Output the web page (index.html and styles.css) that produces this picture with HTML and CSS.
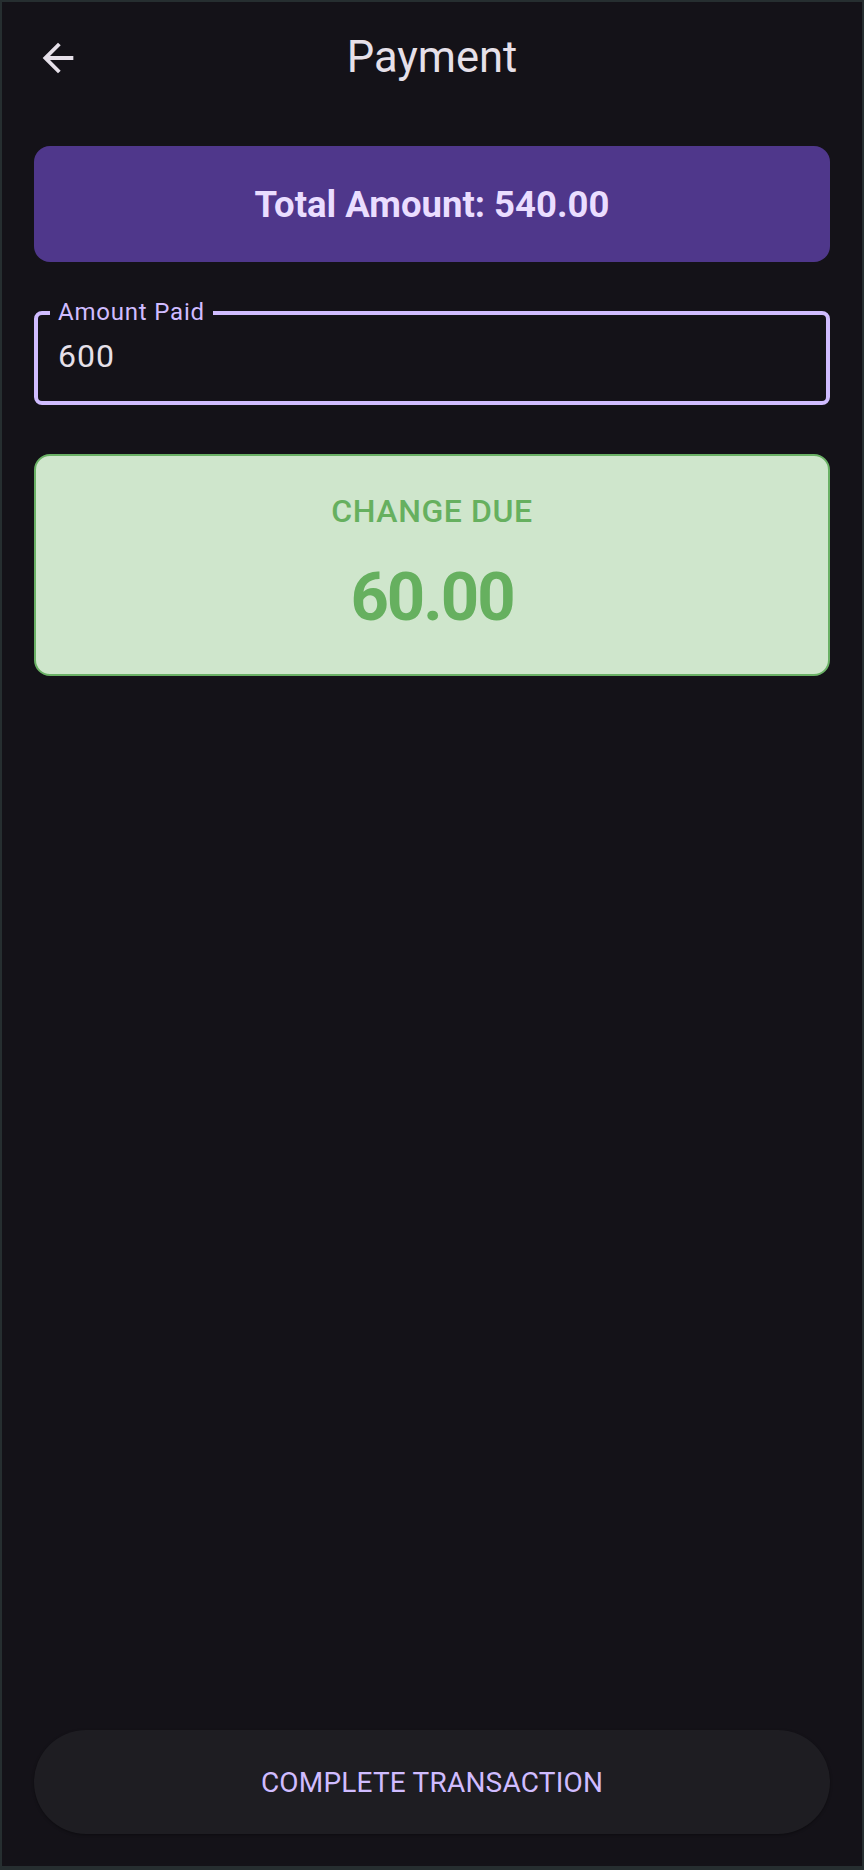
FILE: index.html
```html
<!DOCTYPE html>
<html lang="en">
<head>
<meta charset="utf-8">
<title>Payment</title>
<link rel="stylesheet" href="styles.css">
</head>
<body>
<div class="screen">
  <header class="appbar">
    <div class="appbar-lead">
      <button class="icon-btn" aria-label="Back">
        <svg viewBox="0 0 24 24" width="46" height="46" aria-hidden="true">
          <path d="M20 11H7.83l5.59-5.59L12 4l-8 8 8 8 1.41-1.41L7.83 13H20v-2z" fill="#e6e0e9"/>
        </svg>
      </button>
    </div>
    <h1 class="appbar-title">Payment</h1>
    <div></div>
  </header>

  <main class="content">
    <div class="total-card">Total Amount: 540.00</div>

    <div class="field">
      <span class="field-label">Amount Paid</span>
      <span class="field-value">600</span>
    </div>

    <div class="change-card">
      <div class="change-label">CHANGE DUE</div>
      <div class="change-value">60.00</div>
    </div>

    <button class="complete-btn">COMPLETE TRANSACTION</button>
  </main>
</div>
</body>
</html>
```

FILE: styles.css
```css
html, body {
  margin: 0;
  padding: 0;
}
body {
  background: #262e30;
  font-family: Roboto, "Noto Sans", sans-serif;
  width: 864px;
  height: 1870px;
  padding: 2px 2px 4px 2px;
  box-sizing: border-box;
}
.screen {
  background: #141218;
  height: 100%;
  display: flex;
  flex-direction: column;
}
.appbar {
  height: 112px;
  display: grid;
  grid-template-columns: 1fr auto 1fr;
  align-items: center;
  flex-shrink: 0;
}
.appbar-lead {
  display: flex;
  align-items: center;
  padding-left: 33px;
}
.icon-btn {
  background: none;
  border: 0;
  padding: 0;
  width: 46px;
  height: 46px;
  display: flex;
}
.appbar-title {
  margin: 0;
  font-size: 43.5px;
  font-weight: 400;
  color: #e6e0e9;
  line-height: 50px;
  padding-top: 1px;
  padding-bottom: 1px;
}
.content {
  flex: 1;
  display: flex;
  flex-direction: column;
  padding: 32px 32px 32px 32px;
}
.total-card {
  height: 116px;
  background: #4f378b;
  border-radius: 16px;
  display: flex;
  align-items: center;
  justify-content: center;
  color: #eaddff;
  font-size: 36.5px;
  font-weight: 700;
}
.field {
  position: relative;
  margin-top: 49px;
  height: 94px;
  box-sizing: border-box;
  border: 4px solid #d0bcff;
  border-radius: 8px;
  display: flex;
  align-items: center;
  padding: 0 0 4px 20px;
}
.field-label {
  position: absolute;
  left: 12px;
  top: -15px;
  padding: 0 8px;
  background: #141218;
  color: #d0bcff;
  font-size: 24px;
  line-height: 24px;
  letter-spacing: 0.8px;
}
.field-value {
  color: #e6e0e9;
  font-size: 32px;
  letter-spacing: 1px;
}
.change-card {
  margin-top: 49px;
  background: #cfe6cc;
  border: 2px solid #6ab165;
  border-radius: 16px;
  padding: 37px 0 39px;
  display: flex;
  flex-direction: column;
  align-items: center;
  gap: 30px;
  color: #66b05f;
}
.change-label {
  font-size: 32px;
  font-weight: 500;
  line-height: 36px;
  letter-spacing: 0.6px;
}
.change-value {
  font-size: 67px;
  font-weight: 700;
  line-height: 76px;
  letter-spacing: -2px;
}
.complete-btn {
  margin-top: auto;
  height: 104px;
  border: 0;
  border-radius: 52px;
  background: #1e1d22;
  color: #d0bcff;
  font-family: Roboto, "Noto Sans", sans-serif;
  font-size: 28px;
  font-weight: 400;
  letter-spacing: 0.2px;
  box-shadow: 0 1px 3px rgba(0, 0, 0, 0.35);
}
```
